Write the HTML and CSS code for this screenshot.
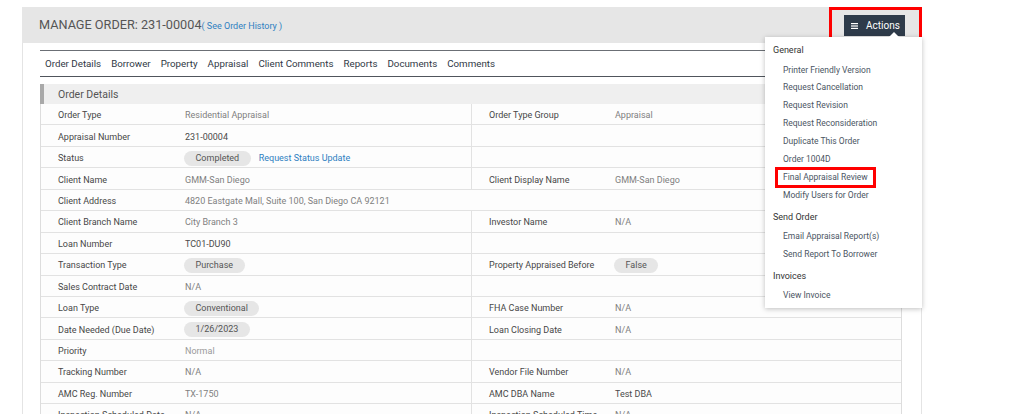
FILE: index.html
```html
<html>
<head>
    <title>Manage Order</title>
    <link rel="stylesheet" href="styles.css">
</head>
<body>
<div class="page">
    <div class="page-header">
        <h1 class="page-title">MANAGE ORDER: 231-00004<a class="history-link" href="#">( See Order History )</a></h1>
        <div class="actions-mark">
            <button class="actions-btn">
                <svg width="7" height="6" viewBox="0 0 7 6"><rect x="0" y="0" width="7" height="1.2" fill="#fff"/><rect x="0" y="2.4" width="7" height="1.2" fill="#fff"/><rect x="0" y="4.8" width="7" height="1.2" fill="#fff"/></svg>
                Actions
            </button>
        </div>
    </div>

    <div class="actions-menu">
        <div class="menu-heading">General</div>
        <a class="menu-item" href="#">Printer Friendly Version</a>
        <a class="menu-item" href="#">Request Cancellation</a>
        <a class="menu-item" href="#">Request Revision</a>
        <a class="menu-item" href="#">Request Reconsideration</a>
        <a class="menu-item" href="#">Duplicate This Order</a>
        <a class="menu-item" href="#">Order 1004D</a>
        <a class="menu-item" href="#"><span class="marked">Final Appraisal Review</span></a>
        <a class="menu-item" href="#">Modify Users for Order</a>
        <div class="menu-heading">Send Order</div>
        <a class="menu-item" href="#">Email Appraisal Report(s)</a>
        <a class="menu-item" href="#">Send Report To Borrower</a>
        <div class="menu-heading">Invoices</div>
        <a class="menu-item" href="#">View Invoice</a>
    </div>

    <div class="page-body">
        <ul class="tabs">
            <li>Order Details</li>
            <li>Borrower</li>
            <li>Property</li>
            <li>Appraisal</li>
            <li>Client Comments</li>
            <li>Reports</li>
            <li>Documents</li>
            <li>Comments</li>
        </ul>

        <div class="section-title">Order Details</div>
        <div class="details">
            <div class="row">
                <div class="label">Order Type</div><div class="value">Residential Appraisal</div>
                <div class="label split">Order Type Group</div><div class="value">Appraisal</div>
            </div>
            <div class="row">
                <div class="label">Appraisal Number</div><div class="value strong">231-00004</div>
                <div class="label split"></div><div class="value"></div>
            </div>
            <div class="row">
                <div class="label">Status</div><div class="value"><span class="pill">Completed</span><a class="link" href="#">Request Status Update</a></div>
                <div class="label split"></div><div class="value"></div>
            </div>
            <div class="row">
                <div class="label">Client Name</div><div class="value">GMM-San Diego</div>
                <div class="label split">Client Display Name</div><div class="value">GMM-San Diego</div>
            </div>
            <div class="row">
                <div class="label">Client Address</div><div class="value wide">4820 Eastgate Mall, Suite 100, San Diego CA 92121</div>
            </div>
            <div class="row">
                <div class="label">Client Branch Name</div><div class="value">City Branch 3</div>
                <div class="label split">Investor Name</div><div class="value">N/A</div>
            </div>
            <div class="row">
                <div class="label">Loan Number</div><div class="value strong">TC01-DU90</div>
                <div class="label split"></div><div class="value"></div>
            </div>
            <div class="row">
                <div class="label">Transaction Type</div><div class="value"><span class="pill">Purchase</span></div>
                <div class="label split">Property Appraised Before</div><div class="value"><span class="pill">False</span></div>
            </div>
            <div class="row">
                <div class="label">Sales Contract Date</div><div class="value">N/A</div>
                <div class="label split"></div><div class="value"></div>
            </div>
            <div class="row">
                <div class="label">Loan Type</div><div class="value"><span class="pill">Conventional</span></div>
                <div class="label split">FHA Case Number</div><div class="value">N/A</div>
            </div>
            <div class="row">
                <div class="label">Date Needed (Due Date)</div><div class="value"><span class="pill">1/26/2023</span></div>
                <div class="label split">Loan Closing Date</div><div class="value">N/A</div>
            </div>
            <div class="row">
                <div class="label">Priority</div><div class="value muted">Normal</div>
                <div class="label split"></div><div class="value"></div>
            </div>
            <div class="row">
                <div class="label">Tracking Number</div><div class="value">N/A</div>
                <div class="label split">Vendor File Number</div><div class="value">N/A</div>
            </div>
            <div class="row">
                <div class="label">AMC Reg. Number</div><div class="value">TX-1750</div>
                <div class="label split">AMC DBA Name</div><div class="value strong">Test DBA</div>
            </div>
            <div class="row">
                <div class="label">Inspection Scheduled Date</div><div class="value">N/A</div>
                <div class="label split">Inspection Scheduled Time</div><div class="value">N/A</div>
            </div>
        </div>
    </div>
</div>
</body>
</html>
```

FILE: styles.css
```css
body {
    margin: 0;
    font-family: Roboto, 'Liberation Sans', sans-serif;
    color: #555555;
    background: #ffffff;
}

.page {
    position: relative;
    margin: 7px 0 0 22px;
    width: 900px;
    min-height: 420px;
    border-left: 1px solid #e4e4e4;
    border-right: 1px solid #e4e4e4;
    box-sizing: border-box;
}

.page-header {
    display: flex;
    justify-content: space-between;
    align-items: flex-start;
    height: 36px;
    background: #e6e6e6;
    padding-left: 17px;
    margin-left: -1px;
    margin-right: -1px;
}

.page-title {
    margin: 0;
    font-size: 12.7px;
    font-weight: normal;
    line-height: 36px;
    color: #555555;
}

.history-link {
    font-size: 9px;
    color: #2f7fc1;
    text-decoration: none;
}

.actions-mark {
    box-sizing: border-box;
    width: 93px;
    height: 34px;
    border: 3px solid #ff0000;
    padding: 5px 14px 0 12px;
}

.actions-btn {
    display: flex;
    align-items: center;
    gap: 8px;
    width: 61px;
    height: 21px;
    padding: 0 0 0 7px;
    border: none;
    background: #2e3b4a;
    color: #ffffff;
    font-family: Roboto, 'Liberation Sans', sans-serif;
    font-size: 10px;
}

.actions-menu {
    position: absolute;
    left: 742px;
    top: 30px;
    width: 157px;
    padding: 3px 0 3px;
    background: #ffffff;
    box-shadow: 0 1px 5px rgba(0, 0, 0, 0.25);
    z-index: 2;
}

.actions-menu:before {
    content: "";
    position: absolute;
    left: 124px;
    top: -5px;
    border-left: 5px solid transparent;
    border-right: 5px solid transparent;
    border-bottom: 5px solid #ffffff;
}

.menu-heading {
    padding: 0 0 1.5px 8px;
    font-size: 9px;
    line-height: 20px;
    color: #333333;
}

.menu-item + .menu-heading {
    margin-top: 2px;
}

.menu-item {
    display: block;
    height: 17.9px;
    padding-left: 18px;
    font-size: 8.5px;
    line-height: 17.9px;
    color: #4b5563;
    text-decoration: none;
}

.menu-item .marked {
    display: inline-block;
    vertical-align: top;
    margin-top: 1.5px;
    line-height: 15px;
    padding: 0 5px;
    margin-left: -5px;
    outline: 3px solid #ff0000;
}

.page-body {
    padding: 7px 19px 0 17px;
}

.tabs {
    display: flex;
    gap: 10px;
    list-style: none;
    margin: 0;
    padding: 1px 0 0 5px;
    height: 24px;
    border-top: 1px solid #6b6f75;
    border-bottom: 1px solid #50555c;
    font-size: 9.75px;
    line-height: 24px;
    color: #2f3845;
}

.section-title {
    margin-top: 7px;
    height: 20px;
    line-height: 21px;
    padding-left: 14px;
    background: #efefef;
    border-left: 4px solid #a9a9a9;
    font-size: 10.5px;
    color: #555555;
}

.details {
    border-left: 1px solid #dddddd;
    border-right: 1px solid #dddddd;
}

.row {
    display: grid;
    grid-template-columns: 144px 286px 144px 1fr;
    height: 21.45px;
    box-sizing: border-box;
    padding-top: 2px;
    border-bottom: 1px solid #e2e2e2;
    align-items: center;
    background: #fdfdfd;
}

.label {
    padding-left: 17px;
    font-size: 9px;
    color: #474747;
    white-space: nowrap;
    overflow: hidden;
}

.label.split {
    height: calc(100% + 2px);
    margin-top: -2px;
    padding-top: 2px;
    box-sizing: border-box;
    display: flex;
    align-items: center;
    border-left: 1px solid #e2e2e2;
}

.value {
    font-size: 9px;
    color: #808080;
    white-space: nowrap;
    display: flex;
    align-items: center;
}

.value.wide {
    grid-column: 2 / 5;
}

.value.strong {
    color: #4a4a4a;
}

.value.muted {
    color: #9a9a9a;
}

.pill {
    display: inline-block;
    height: 15px;
    line-height: 15px;
    padding: 0 11.5px;
    margin-left: -1px;
    border-radius: 8px;
    background: #e6e6e6;
    color: #555555;
}

.link {
    margin-left: 8px;
    color: #2f7fc1;
    text-decoration: none;
}
```
